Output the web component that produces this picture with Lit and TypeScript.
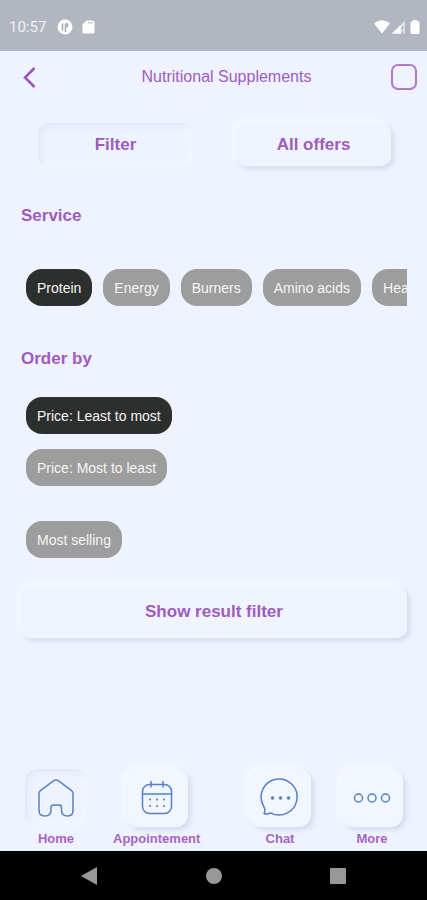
import { LitElement, html, css, svg } from "lit";
import { customElement, state } from "lit/decorators.js";

const services = ["Protein", "Energy", "Burners", "Amino acids", "Health"];

const icons = {
  home: svg`<path d="M4 15.5 Q4 13.5 5.6 12.3 L18.5 2.8 Q21 1 23.5 2.8 L36.4 12.3 Q38 13.5 38 15.5 V32.5 Q38 38 32.5 38 Q26.500 38 26.500 32 V29.500 Q26.500 27 24 27 H18.500 Q16 27 16 29.500 V32 Q16 38 10 38 Q4 38 4 32.500 Z" />`,
  calendar: svg`<rect x="6.500" y="6.500" width="29" height="29" rx="7" />
    <path d="M6.500 16 H35.500 M15 3.500 V9 M27 3.500 V9" />
    <path d="M14 21.500 h.1 M21 21.500 h.1 M28 21.500 h.1 M14 28 h.1 M21 28 h.1 M28 28 h.1" stroke-width="2" />`,
  chat: svg`<path d="M4.500 28 A18 18 0 1 1 11.500 34.800 Q9 36.800 5 35.500 Q7 32 4.500 28 Z" />
    <path d="M13.500 20 h.1 M21.500 20 h.1 M29.500 20 h.1" stroke-width="3.400" />`,
  more: svg`<circle cx="7.500" cy="20" r="4" /><circle cx="21" cy="20" r="4" /><circle cx="34.500" cy="20" r="4" />`,
};

@customElement("app-root")
export class AppRoot extends LitElement {
  @state() private service = "Protein";
  @state() private order = "least";

  static styles = css`
    :host {
      display: flex;
      flex-direction: column;
      min-height: 100vh;
      background: #eef3ff;
      color: #a05cbc;
      font-family: "Liberation Sans", Arial, sans-serif;
    }
    * { box-sizing: border-box; }
    button {
      border: 0;
      margin: 0;
      padding: 0;
      background: none;
      font: inherit;
      color: inherit;
      cursor: pointer;
    }
    svg { display: block; }
    .status {
      display: flex;
      align-items: center;
      height: 51px;
      padding: 2px 6px 0 9px;
      background: #b2b6c0;
      color: #f1f2f5;
      font: 15px/20px Roboto, sans-serif;
    }
    .notices { display: flex; gap: 9px; margin-left: 11px; }
    .signals { display: flex; gap: 1px; margin-left: auto; }
    header {
      display: grid;
      grid-template-columns: 46px 1fr 26px;
      align-items: center;
      height: 52px;
      padding: 0 10px 0 16px;
    }
    .back { width: 24px; height: 28px; }
    h1 {
      margin: 0;
      text-align: center;
      font-size: 16px;
      line-height: 20px;
      font-weight: 400;
    }
    .box {
      appearance: none;
      width: 26px;
      height: 26px;
      margin: 0;
      border: 2px solid #b37acb;
      border-radius: 7px;
    }
    .box:checked { background: #b37acb; }
    main { flex: 1; padding: 0 20px 0 21px; }
    .modes {
      display: grid;
      grid-template-columns: 1fr 1fr;
      gap: 43px;
      padding: 20px 16px 0 17px;
    }
    .modes button, .submit {
      border-radius: 10px;
      font-size: 17px;
      line-height: 20px;
      font-weight: 700;
    }
    .modes button { height: 43px; }
    .sunk { box-shadow: inset 3px 3px 6px #e3e8f3, inset -3px -3px 5px #f4f7ff; }
    .raised {
      background: #eff4ff;
      box-shadow: 3px 3px 5px #d5dceb, -3px -3px 5px #f7faff;
    }
    h2 {
      margin: 0;
      font-size: 17px;
      line-height: 20px;
      font-weight: 700;
    }
    .service { padding-top: 40px; }
    .order { padding-top: 43px; }
    .row {
      display: flex;
      gap: 11px;
      margin-top: 43px;
      padding-left: 5px;
      overflow-x: auto;
      scrollbar-width: none;
    }
    .stack {
      display: grid;
      justify-items: start;
      row-gap: 15px;
      margin: 28px 0;
      padding-left: 5px;
    }
    .last { margin-top: 20px; }
    .chip {
      flex: none;
      height: 37px;
      padding: 0 11px;
      border-radius: 16px;
      background: #9c9d9c;
      color: #f6f6f6;
      font-size: 14px;
      line-height: 20px;
      white-space: nowrap;
    }
    .chip[aria-pressed="true"] { background: #2d2f2e; }
    .submit { width: 100%; height: 52px; }
    nav {
      display: flex;
      justify-content: space-between;
      padding: 16px 24px 4px 25px;
    }
    .pair { display: flex; gap: 26px; }
    .pair + .pair { gap: 30px; }
    .tab {
      display: grid;
      justify-items: center;
      row-gap: 4px;
      min-width: 62px;
      color: #a566bf;
      font-size: 13px;
      line-height: 16px;
      font-weight: 700;
      text-decoration: none;
    }
    .tile {
      display: grid;
      place-items: center;
      width: 62px;
      height: 58px;
      border-radius: 12px;
    }
    .tile.raised { background: #f2f6ff; }
    .icon {
      width: 42px;
      height: 40px;
      fill: none;
      stroke: #5680c4;
      stroke-width: 1.5;
      stroke-linecap: round;
      stroke-linejoin: round;
    }
    footer {
      display: flex;
      justify-content: space-between;
      align-items: center;
      height: 49px;
      padding: 0 80px;
      background: #000;
    }
    footer svg { fill: #989898; }
  `;

  private chip(label: string, on: boolean, pick: () => void, extra = "") {
    return html`<button class="chip ${extra}" aria-pressed=${on} @click=${pick}>${label}</button>`;
  }

  private tab(label: string, icon: unknown, style: string) {
    return html`<a class="tab" href="#${label.toLowerCase()}">
      <span class="tile ${style}"><svg class="icon" viewBox="0 0 42 40" aria-hidden="true">${icon}</svg></span>
      ${label}
    </a>`;
  }

  render() {
    return html`
      <div class="status">
        <span>10:57</span>
        <div class="notices">
          <svg width="16" height="16" viewBox="0 0 16 16"><circle cx="8" cy="8" r="7.500" fill="#fff" /><path d="M5.500 4.500 V11.500 M8.500 13 V4.500 M8.500 5 H10.500 V7.500 H9" stroke="#a5a9b3" stroke-width="1.500" fill="none" /></svg>
          <svg width="13" height="16" viewBox="0 0 13 16"><path d="M4.500 1.500 H11 Q12.500 1.500 12.500 3 V13 Q12.500 14.500 11 14.500 H2 Q.5 14.500 .5 13 V5.500 Z" fill="#fff" /><path d="M5.500 3.800 H11" stroke="#b2b6c0" /></svg>
        </div>
        <div class="signals">
          <svg width="16" height="16" viewBox="0 0 16 16"><path d="M0 4.500 Q8 -2 16 4.500 L8 14.500 Z" fill="#fff" /></svg>
          <svg width="15" height="16" viewBox="0 0 15 16"><path d="M1 14.500 L14 1.500 V14.500 Z" fill="#dfe1e6" /><path d="M1 14.500 L9.500 6 V14.500 Z" fill="#fff" /><path d="M11.500 7 V11 M11.500 12.500 V14" stroke="#b2b6c0" stroke-width="1.500" /></svg>
          <svg width="14" height="16" viewBox="0 0 14 16"><path d="M6 2 V1 H10 V2 Q12.500 2 12.500 4 V13.500 Q12.500 15 11 15 H5 Q3.500 15 3.500 13.500 V4 Q3.500 2 6 2 Z" fill="#fff" /></svg>
        </div>
      </div>
      <header>
        <button class="back" aria-label="Back">
          <svg width="24" height="28" viewBox="0 0 24 28" fill="none" stroke="#9a58b8" stroke-width="2.500"><path d="M18.500 5 L9 14.500 L18.500 24" /></svg>
        </button>
        <h1>Nutritional Supplements</h1>
        <input class="box" type="checkbox" aria-label="Select" />
      </header>
      <main>
        <div class="modes">
          <button class="sunk">Filter</button>
          <button class="raised">All offers</button>
        </div>
        <section class="service">
          <h2>Service</h2>
          <div class="row">
            ${services.map((s) => this.chip(s, s === this.service, () => (this.service = s)))}
          </div>
        </section>
        <section class="order">
          <h2>Order by</h2>
          <div class="stack">
            ${this.chip("Price: Least to most", this.order === "least", () => (this.order = "least"))}
            ${this.chip("Price: Most to least", this.order === "most", () => (this.order = "most"))}
            ${this.chip("Most selling", this.order === "selling", () => (this.order = "selling"), "last")}
          </div>
        </section>
        <button class="submit raised">Show result filter</button>
      </main>
      <nav>
        <div class="pair">
          ${this.tab("Home", icons.home, "sunk")}
          ${this.tab("Appointement", icons.calendar, "raised")}
        </div>
        <div class="pair">
          ${this.tab("Chat", icons.chat, "raised")}
          ${this.tab("More", icons.more, "raised")}
        </div>
      </nav>
      <footer>
        <svg width="18" height="18" viewBox="0 0 18 18"><path d="M1 9 L17 0 V18 Z" /></svg>
        <svg width="16" height="16" viewBox="0 0 16 16"><circle cx="8" cy="8" r="8" /></svg>
        <svg width="18" height="18" viewBox="0 0 18 18"><rect x="1" y="1" width="16" height="16" rx="1" /></svg>
      </footer>
    `;
  }
}
